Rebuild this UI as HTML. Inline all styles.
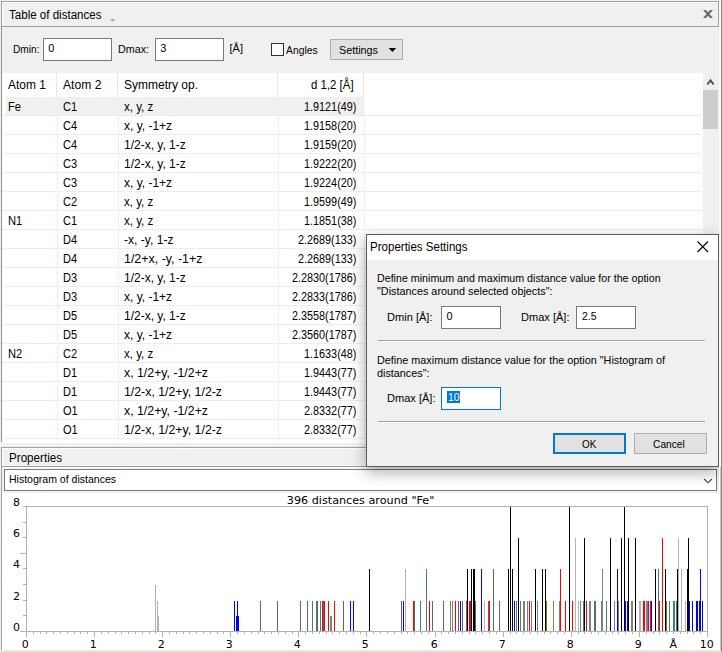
<!DOCTYPE html>
<html><head><meta charset="utf-8"><title>Table of distances</title>
<style>
html,body{margin:0;padding:0;}
body{width:722px;height:652px;overflow:hidden;background:#f0f0f0;position:relative;font-family:"Liberation Sans",sans-serif;font-size:12px;color:#000;}
div{position:absolute;box-sizing:border-box;white-space:nowrap;}
.inp{background:#fff;border:1px solid #7a7a7a;}
.btn{background:#e1e1e1;border:1px solid #adadad;}
</style></head><body>
<!-- outer frame -->
<div style="left:1px;top:1px;width:718px;height:441px;border-left:1px solid #929292;"></div>
<div style="left:721px;top:0;width:1px;height:652px;background:#8c8c8c;"></div>
<div style="left:719px;top:0;width:2px;height:447px;background:#fafafa;"></div>
<!-- title bar -->
<div style="left:1px;top:1px;width:718px;height:26px;border:1px solid #a0a0a0;background:#f0f0f0;box-shadow:inset 1px 1px 0 #fff;"></div>
<div id="t1" style="left:9.00px;top:7px;font:12px/16px 'Liberation Sans',sans-serif;transform:scaleX(0.9630);transform-origin:0 0;">Table of distances</div>
<svg style="position:absolute;left:110px;top:19px" width="6" height="4"><path d="M0 0H5.4L2.7 3Z" fill="#acacac"/></svg>
<svg style="position:absolute;left:703px;top:10px" width="10" height="8"><path d="M0 0H2.9L10 8H7.1Z" fill="#6a6a6a"/><path d="M10 0H7.1L0 8H2.9Z" fill="#6a6a6a"/></svg>
<!-- toolbar -->
<div style="left:12.50px;top:41px;font:11px/16px 'Liberation Sans',sans-serif;transform:scaleX(0.9225);transform-origin:0 0;">Dmin:</div>
<div class="inp" style="left:43px;top:38px;width:69px;height:23px;"></div>
<div style="left:48.30px;top:40px;font:11px/16px 'Liberation Sans',sans-serif;">0</div>
<div style="left:118.00px;top:41px;font:11px/16px 'Liberation Sans',sans-serif;transform:scaleX(0.9754);transform-origin:0 0;">Dmax:</div>
<div class="inp" style="left:155px;top:38px;width:69px;height:23px;"></div>
<div style="left:160.30px;top:40px;font:11px/16px 'Liberation Sans',sans-serif;">3</div>
<div style="left:229.50px;top:40px;font:11px/16px 'Liberation Sans',sans-serif;">[Å]</div>
<div style="left:271px;top:43px;width:13px;height:13px;background:#fff;border:1px solid #333;"></div>
<div style="left:286.20px;top:42px;font:11px/16px 'Liberation Sans',sans-serif;transform:scaleX(0.9395);transform-origin:0 0;">Angles</div>
<div class="btn" style="left:330px;top:39px;width:73px;height:21px;"></div>
<div style="left:338.50px;top:42px;font:11px/16px 'Liberation Sans',sans-serif;transform:scaleX(0.9812);transform-origin:0 0;">Settings</div>
<svg style="position:absolute;left:388px;top:48px" width="9" height="5"><path d="M0.7 0H8.1L4.4 4Z" fill="#000"/></svg>
<!-- table -->
<div style="left:2px;top:73px;width:701px;height:370px;background:#fff;"></div>
<div style="left:6px;top:97px;width:358px;height:19px;background:#f0f0f0;"></div>
<div style="left:2px;top:115px;width:700px;height:1px;background:#ededed;"></div>
<div style="left:2px;top:134px;width:700px;height:1px;background:#ededed;"></div>
<div style="left:2px;top:153px;width:700px;height:1px;background:#ededed;"></div>
<div style="left:2px;top:172px;width:700px;height:1px;background:#ededed;"></div>
<div style="left:2px;top:191px;width:700px;height:1px;background:#ededed;"></div>
<div style="left:2px;top:210px;width:700px;height:1px;background:#ededed;"></div>
<div style="left:2px;top:229px;width:700px;height:1px;background:#ededed;"></div>
<div style="left:2px;top:248px;width:700px;height:1px;background:#ededed;"></div>
<div style="left:2px;top:267px;width:700px;height:1px;background:#ededed;"></div>
<div style="left:2px;top:286px;width:700px;height:1px;background:#ededed;"></div>
<div style="left:2px;top:305px;width:700px;height:1px;background:#ededed;"></div>
<div style="left:2px;top:324px;width:700px;height:1px;background:#ededed;"></div>
<div style="left:2px;top:343px;width:700px;height:1px;background:#ededed;"></div>
<div style="left:2px;top:362px;width:700px;height:1px;background:#ededed;"></div>
<div style="left:2px;top:381px;width:700px;height:1px;background:#ededed;"></div>
<div style="left:2px;top:400px;width:700px;height:1px;background:#ededed;"></div>
<div style="left:2px;top:419px;width:700px;height:1px;background:#ededed;"></div>
<div style="left:2px;top:438px;width:700px;height:1px;background:#ededed;"></div>
<div style="left:56px;top:73px;width:1px;height:24px;background:#e5e5e5;"></div>
<div style="left:57px;top:116px;width:1px;height:327px;background:#efefef;"></div>
<div style="left:117px;top:73px;width:1px;height:24px;background:#e5e5e5;"></div>
<div style="left:118px;top:116px;width:1px;height:327px;background:#efefef;"></div>
<div style="left:277px;top:73px;width:1px;height:24px;background:#e5e5e5;"></div>
<div style="left:278px;top:116px;width:1px;height:327px;background:#efefef;"></div>
<div style="left:363px;top:73px;width:1px;height:24px;background:#e5e5e5;"></div>
<div style="left:364px;top:116px;width:1px;height:327px;background:#efefef;"></div>
<div style="left:8.00px;top:77px;font:12px/16px 'Liberation Sans',sans-serif;transform:scaleX(0.9943);transform-origin:0 0;">Atom 1</div>
<div style="left:63.00px;top:77px;font:12px/16px 'Liberation Sans',sans-serif;transform:scaleX(1.0101);transform-origin:0 0;">Atom 2</div>
<div style="left:124.00px;top:77px;font:12px/16px 'Liberation Sans',sans-serif;">Symmetry op.</div>
<div style="left:310.70px;top:77px;font:12px/16px 'Liberation Sans',sans-serif;transform:scaleX(0.9531);transform-origin:0 0;">d 1,2 [Å]</div>
<div style="left:8.00px;top:99px;font:12px/16px 'Liberation Sans',sans-serif;transform:scaleX(0.9300);transform-origin:0 0;">Fe</div>
<div style="left:63.00px;top:99px;font:12px/16px 'Liberation Sans',sans-serif;transform:scaleX(0.9200);transform-origin:0 0;">C1</div>
<div style="left:124.00px;top:99px;font:12px/16px 'Liberation Sans',sans-serif;transform:scaleX(0.9624);transform-origin:0 0;">x, y, z</div>
<div style="left:304.40px;top:99px;font:12px/16px 'Liberation Sans',sans-serif;transform:scaleX(0.9028);transform-origin:0 0;">1.9121(49)</div>
<div style="left:63.00px;top:118px;font:12px/16px 'Liberation Sans',sans-serif;transform:scaleX(0.9200);transform-origin:0 0;">C4</div>
<div style="left:124.00px;top:118px;font:12px/16px 'Liberation Sans',sans-serif;">x, y, -1+z</div>
<div style="left:304.40px;top:118px;font:12px/16px 'Liberation Sans',sans-serif;transform:scaleX(0.9028);transform-origin:0 0;">1.9158(20)</div>
<div style="left:63.00px;top:137px;font:12px/16px 'Liberation Sans',sans-serif;transform:scaleX(0.9200);transform-origin:0 0;">C4</div>
<div style="left:124.00px;top:137px;font:12px/16px 'Liberation Sans',sans-serif;">1/2-x, y, 1-z</div>
<div style="left:304.40px;top:137px;font:12px/16px 'Liberation Sans',sans-serif;transform:scaleX(0.9028);transform-origin:0 0;">1.9159(20)</div>
<div style="left:63.00px;top:156px;font:12px/16px 'Liberation Sans',sans-serif;transform:scaleX(0.9200);transform-origin:0 0;">C3</div>
<div style="left:124.00px;top:156px;font:12px/16px 'Liberation Sans',sans-serif;">1/2-x, y, 1-z</div>
<div style="left:304.40px;top:156px;font:12px/16px 'Liberation Sans',sans-serif;transform:scaleX(0.9028);transform-origin:0 0;">1.9222(20)</div>
<div style="left:63.00px;top:175px;font:12px/16px 'Liberation Sans',sans-serif;transform:scaleX(0.9200);transform-origin:0 0;">C3</div>
<div style="left:124.00px;top:175px;font:12px/16px 'Liberation Sans',sans-serif;">x, y, -1+z</div>
<div style="left:304.40px;top:175px;font:12px/16px 'Liberation Sans',sans-serif;transform:scaleX(0.9028);transform-origin:0 0;">1.9224(20)</div>
<div style="left:63.00px;top:194px;font:12px/16px 'Liberation Sans',sans-serif;transform:scaleX(0.9200);transform-origin:0 0;">C2</div>
<div style="left:124.00px;top:194px;font:12px/16px 'Liberation Sans',sans-serif;transform:scaleX(0.9624);transform-origin:0 0;">x, y, z</div>
<div style="left:304.40px;top:194px;font:12px/16px 'Liberation Sans',sans-serif;transform:scaleX(0.9028);transform-origin:0 0;">1.9599(49)</div>
<div style="left:8.00px;top:213px;font:12px/16px 'Liberation Sans',sans-serif;transform:scaleX(0.9300);transform-origin:0 0;">N1</div>
<div style="left:63.00px;top:213px;font:12px/16px 'Liberation Sans',sans-serif;transform:scaleX(0.9200);transform-origin:0 0;">C1</div>
<div style="left:124.00px;top:213px;font:12px/16px 'Liberation Sans',sans-serif;transform:scaleX(0.9624);transform-origin:0 0;">x, y, z</div>
<div style="left:304.40px;top:213px;font:12px/16px 'Liberation Sans',sans-serif;transform:scaleX(0.9028);transform-origin:0 0;">1.1851(38)</div>
<div style="left:63.00px;top:232px;font:12px/16px 'Liberation Sans',sans-serif;transform:scaleX(0.9200);transform-origin:0 0;">D4</div>
<div style="left:124.00px;top:232px;font:12px/16px 'Liberation Sans',sans-serif;transform:scaleX(1.0080);transform-origin:0 0;">-x, -y, 1-z</div>
<div style="left:298.40px;top:232px;font:12px/16px 'Liberation Sans',sans-serif;transform:scaleX(0.9024);transform-origin:0 0;">2.2689(133)</div>
<div style="left:63.00px;top:251px;font:12px/16px 'Liberation Sans',sans-serif;transform:scaleX(0.9200);transform-origin:0 0;">D4</div>
<div style="left:124.00px;top:251px;font:12px/16px 'Liberation Sans',sans-serif;transform:scaleX(1.0355);transform-origin:0 0;">1/2+x, -y, -1+z</div>
<div style="left:298.40px;top:251px;font:12px/16px 'Liberation Sans',sans-serif;transform:scaleX(0.9024);transform-origin:0 0;">2.2689(133)</div>
<div style="left:63.00px;top:270px;font:12px/16px 'Liberation Sans',sans-serif;transform:scaleX(0.9200);transform-origin:0 0;">D3</div>
<div style="left:124.00px;top:270px;font:12px/16px 'Liberation Sans',sans-serif;">1/2-x, y, 1-z</div>
<div style="left:292.40px;top:270px;font:12px/16px 'Liberation Sans',sans-serif;transform:scaleX(0.9021);transform-origin:0 0;">2.2830(1786)</div>
<div style="left:63.00px;top:289px;font:12px/16px 'Liberation Sans',sans-serif;transform:scaleX(0.9200);transform-origin:0 0;">D3</div>
<div style="left:124.00px;top:289px;font:12px/16px 'Liberation Sans',sans-serif;">x, y, -1+z</div>
<div style="left:292.40px;top:289px;font:12px/16px 'Liberation Sans',sans-serif;transform:scaleX(0.9021);transform-origin:0 0;">2.2833(1786)</div>
<div style="left:63.00px;top:308px;font:12px/16px 'Liberation Sans',sans-serif;transform:scaleX(0.9200);transform-origin:0 0;">D5</div>
<div style="left:124.00px;top:308px;font:12px/16px 'Liberation Sans',sans-serif;">1/2-x, y, 1-z</div>
<div style="left:292.40px;top:308px;font:12px/16px 'Liberation Sans',sans-serif;transform:scaleX(0.9021);transform-origin:0 0;">2.3558(1787)</div>
<div style="left:63.00px;top:327px;font:12px/16px 'Liberation Sans',sans-serif;transform:scaleX(0.9200);transform-origin:0 0;">D5</div>
<div style="left:124.00px;top:327px;font:12px/16px 'Liberation Sans',sans-serif;">x, y, -1+z</div>
<div style="left:292.40px;top:327px;font:12px/16px 'Liberation Sans',sans-serif;transform:scaleX(0.9021);transform-origin:0 0;">2.3560(1787)</div>
<div style="left:8.00px;top:346px;font:12px/16px 'Liberation Sans',sans-serif;transform:scaleX(0.9300);transform-origin:0 0;">N2</div>
<div style="left:63.00px;top:346px;font:12px/16px 'Liberation Sans',sans-serif;transform:scaleX(0.9200);transform-origin:0 0;">C2</div>
<div style="left:124.00px;top:346px;font:12px/16px 'Liberation Sans',sans-serif;transform:scaleX(0.9624);transform-origin:0 0;">x, y, z</div>
<div style="left:304.40px;top:346px;font:12px/16px 'Liberation Sans',sans-serif;transform:scaleX(0.9028);transform-origin:0 0;">1.1633(48)</div>
<div style="left:63.00px;top:365px;font:12px/16px 'Liberation Sans',sans-serif;transform:scaleX(0.9200);transform-origin:0 0;">D1</div>
<div style="left:124.00px;top:365px;font:12px/16px 'Liberation Sans',sans-serif;transform:scaleX(1.0266);transform-origin:0 0;">x, 1/2+y, -1/2+z</div>
<div style="left:304.40px;top:365px;font:12px/16px 'Liberation Sans',sans-serif;transform:scaleX(0.9028);transform-origin:0 0;">1.9443(77)</div>
<div style="left:63.00px;top:384px;font:12px/16px 'Liberation Sans',sans-serif;transform:scaleX(0.9200);transform-origin:0 0;">D1</div>
<div style="left:124.00px;top:384px;font:12px/16px 'Liberation Sans',sans-serif;transform:scaleX(1.0263);transform-origin:0 0;">1/2-x, 1/2+y, 1/2-z</div>
<div style="left:304.40px;top:384px;font:12px/16px 'Liberation Sans',sans-serif;transform:scaleX(0.9028);transform-origin:0 0;">1.9443(77)</div>
<div style="left:63.00px;top:403px;font:12px/16px 'Liberation Sans',sans-serif;transform:scaleX(0.9200);transform-origin:0 0;">O1</div>
<div style="left:124.00px;top:403px;font:12px/16px 'Liberation Sans',sans-serif;transform:scaleX(1.0266);transform-origin:0 0;">x, 1/2+y, -1/2+z</div>
<div style="left:304.40px;top:403px;font:12px/16px 'Liberation Sans',sans-serif;transform:scaleX(0.9028);transform-origin:0 0;">2.8332(77)</div>
<div style="left:63.00px;top:422px;font:12px/16px 'Liberation Sans',sans-serif;transform:scaleX(0.9200);transform-origin:0 0;">O1</div>
<div style="left:124.00px;top:422px;font:12px/16px 'Liberation Sans',sans-serif;transform:scaleX(1.0263);transform-origin:0 0;">1/2-x, 1/2+y, 1/2-z</div>
<div style="left:304.40px;top:422px;font:12px/16px 'Liberation Sans',sans-serif;transform:scaleX(0.9028);transform-origin:0 0;">2.8332(77)</div>
<!-- scrollbar -->
<div style="left:703px;top:73px;width:16px;height:370px;background:#f0f0f0;"></div>
<div style="left:703px;top:90px;width:15px;height:39px;background:#cdcdcd;"></div>
<svg style="position:absolute;left:706px;top:78px" width="9" height="8"><path d="M1.4 6.5L4.5 2.5L7.6 6.5" stroke="#505050" stroke-width="2" fill="none"/></svg>
<!-- properties panel -->
<div style="left:1px;top:447px;width:720px;height:204px;background:#fff;border:1px solid #a0a0a0;border-bottom:none;"></div>
<div style="left:2px;top:448px;width:718px;height:19px;background:#f0f0f0;border-bottom:1px solid #a0a0a0;box-shadow:inset 1px 1px 0 #fff;"></div>
<div id="t2" style="left:9.00px;top:450px;font:12px/16px 'Liberation Sans',sans-serif;transform:scaleX(0.9691);transform-origin:0 0;">Properties</div>
<div style="left:2px;top:467px;width:718px;height:26px;background:#f0f0f0;border-top:2px solid #f9f9f9;"></div>
<div style="left:4px;top:469px;width:713px;height:22px;background:#fff;border:1px solid #7a7a7a;"></div>
<div style="left:8.50px;top:471px;font:11px/16px 'Liberation Sans',sans-serif;transform:scaleX(0.9564);transform-origin:0 0;">Histogram of distances</div>
<svg style="position:absolute;left:703px;top:478px" width="10" height="6"><path d="M1.2 1L5 4.8L8.8 1" stroke="#404040" stroke-width="1.1" fill="none"/></svg>
<div style="left:0;top:650px;width:722px;height:2px;background:#e6e6e6;"></div>
<svg id="chart" width="722" height="652" viewBox="0 0 722 652" style="position:absolute;left:0;top:0" shape-rendering="crispEdges">
<rect x="26.5" y="506.5" width="681" height="125" fill="none" stroke="#b2b2b2" stroke-width="1"/>
<rect x="20" y="631" width="6" height="1" fill="#b2b2b2"/>
<rect x="23" y="615" width="3" height="1" fill="#b2b2b2"/>
<rect x="23" y="600" width="3" height="1" fill="#b2b2b2"/>
<rect x="23" y="584" width="3" height="1" fill="#b2b2b2"/>
<rect x="23" y="568" width="3" height="1" fill="#b2b2b2"/>
<rect x="20" y="553" width="6" height="1" fill="#b2b2b2"/>
<rect x="23" y="537" width="3" height="1" fill="#b2b2b2"/>
<rect x="23" y="522" width="3" height="1" fill="#b2b2b2"/>
<rect x="23" y="506" width="3" height="1" fill="#b2b2b2"/>
<rect x="26" y="632" width="1" height="5" fill="#b2b2b2"/>
<rect x="33" y="632" width="1" height="2" fill="#b2b2b2"/>
<rect x="40" y="632" width="1" height="2" fill="#b2b2b2"/>
<rect x="46" y="632" width="1" height="2" fill="#b2b2b2"/>
<rect x="53" y="632" width="1" height="2" fill="#b2b2b2"/>
<rect x="60" y="632" width="1" height="2" fill="#b2b2b2"/>
<rect x="67" y="632" width="1" height="2" fill="#b2b2b2"/>
<rect x="74" y="632" width="1" height="2" fill="#b2b2b2"/>
<rect x="80" y="632" width="1" height="2" fill="#b2b2b2"/>
<rect x="87" y="632" width="1" height="2" fill="#b2b2b2"/>
<rect x="94" y="632" width="1" height="5" fill="#b2b2b2"/>
<rect x="101" y="632" width="1" height="2" fill="#b2b2b2"/>
<rect x="108" y="632" width="1" height="2" fill="#b2b2b2"/>
<rect x="115" y="632" width="1" height="2" fill="#b2b2b2"/>
<rect x="121" y="632" width="1" height="2" fill="#b2b2b2"/>
<rect x="128" y="632" width="1" height="2" fill="#b2b2b2"/>
<rect x="135" y="632" width="1" height="2" fill="#b2b2b2"/>
<rect x="142" y="632" width="1" height="2" fill="#b2b2b2"/>
<rect x="149" y="632" width="1" height="2" fill="#b2b2b2"/>
<rect x="155" y="632" width="1" height="2" fill="#b2b2b2"/>
<rect x="162" y="632" width="1" height="5" fill="#b2b2b2"/>
<rect x="169" y="632" width="1" height="2" fill="#b2b2b2"/>
<rect x="176" y="632" width="1" height="2" fill="#b2b2b2"/>
<rect x="183" y="632" width="1" height="2" fill="#b2b2b2"/>
<rect x="189" y="632" width="1" height="2" fill="#b2b2b2"/>
<rect x="196" y="632" width="1" height="2" fill="#b2b2b2"/>
<rect x="203" y="632" width="1" height="2" fill="#b2b2b2"/>
<rect x="210" y="632" width="1" height="2" fill="#b2b2b2"/>
<rect x="217" y="632" width="1" height="2" fill="#b2b2b2"/>
<rect x="223" y="632" width="1" height="2" fill="#b2b2b2"/>
<rect x="230" y="632" width="1" height="5" fill="#b2b2b2"/>
<rect x="237" y="632" width="1" height="2" fill="#b2b2b2"/>
<rect x="244" y="632" width="1" height="2" fill="#b2b2b2"/>
<rect x="251" y="632" width="1" height="2" fill="#b2b2b2"/>
<rect x="258" y="632" width="1" height="2" fill="#b2b2b2"/>
<rect x="264" y="632" width="1" height="2" fill="#b2b2b2"/>
<rect x="271" y="632" width="1" height="2" fill="#b2b2b2"/>
<rect x="278" y="632" width="1" height="2" fill="#b2b2b2"/>
<rect x="285" y="632" width="1" height="2" fill="#b2b2b2"/>
<rect x="292" y="632" width="1" height="2" fill="#b2b2b2"/>
<rect x="298" y="632" width="1" height="5" fill="#b2b2b2"/>
<rect x="305" y="632" width="1" height="2" fill="#b2b2b2"/>
<rect x="312" y="632" width="1" height="2" fill="#b2b2b2"/>
<rect x="319" y="632" width="1" height="2" fill="#b2b2b2"/>
<rect x="326" y="632" width="1" height="2" fill="#b2b2b2"/>
<rect x="332" y="632" width="1" height="2" fill="#b2b2b2"/>
<rect x="339" y="632" width="1" height="2" fill="#b2b2b2"/>
<rect x="346" y="632" width="1" height="2" fill="#b2b2b2"/>
<rect x="353" y="632" width="1" height="2" fill="#b2b2b2"/>
<rect x="360" y="632" width="1" height="2" fill="#b2b2b2"/>
<rect x="366" y="632" width="1" height="5" fill="#b2b2b2"/>
<rect x="373" y="632" width="1" height="2" fill="#b2b2b2"/>
<rect x="380" y="632" width="1" height="2" fill="#b2b2b2"/>
<rect x="387" y="632" width="1" height="2" fill="#b2b2b2"/>
<rect x="394" y="632" width="1" height="2" fill="#b2b2b2"/>
<rect x="401" y="632" width="1" height="2" fill="#b2b2b2"/>
<rect x="407" y="632" width="1" height="2" fill="#b2b2b2"/>
<rect x="414" y="632" width="1" height="2" fill="#b2b2b2"/>
<rect x="421" y="632" width="1" height="2" fill="#b2b2b2"/>
<rect x="428" y="632" width="1" height="2" fill="#b2b2b2"/>
<rect x="435" y="632" width="1" height="5" fill="#b2b2b2"/>
<rect x="441" y="632" width="1" height="2" fill="#b2b2b2"/>
<rect x="448" y="632" width="1" height="2" fill="#b2b2b2"/>
<rect x="455" y="632" width="1" height="2" fill="#b2b2b2"/>
<rect x="462" y="632" width="1" height="2" fill="#b2b2b2"/>
<rect x="469" y="632" width="1" height="2" fill="#b2b2b2"/>
<rect x="475" y="632" width="1" height="2" fill="#b2b2b2"/>
<rect x="482" y="632" width="1" height="2" fill="#b2b2b2"/>
<rect x="489" y="632" width="1" height="2" fill="#b2b2b2"/>
<rect x="496" y="632" width="1" height="2" fill="#b2b2b2"/>
<rect x="503" y="632" width="1" height="5" fill="#b2b2b2"/>
<rect x="510" y="632" width="1" height="2" fill="#b2b2b2"/>
<rect x="516" y="632" width="1" height="2" fill="#b2b2b2"/>
<rect x="523" y="632" width="1" height="2" fill="#b2b2b2"/>
<rect x="530" y="632" width="1" height="2" fill="#b2b2b2"/>
<rect x="537" y="632" width="1" height="2" fill="#b2b2b2"/>
<rect x="544" y="632" width="1" height="2" fill="#b2b2b2"/>
<rect x="550" y="632" width="1" height="2" fill="#b2b2b2"/>
<rect x="557" y="632" width="1" height="2" fill="#b2b2b2"/>
<rect x="564" y="632" width="1" height="2" fill="#b2b2b2"/>
<rect x="571" y="632" width="1" height="5" fill="#b2b2b2"/>
<rect x="578" y="632" width="1" height="2" fill="#b2b2b2"/>
<rect x="584" y="632" width="1" height="2" fill="#b2b2b2"/>
<rect x="591" y="632" width="1" height="2" fill="#b2b2b2"/>
<rect x="598" y="632" width="1" height="2" fill="#b2b2b2"/>
<rect x="605" y="632" width="1" height="2" fill="#b2b2b2"/>
<rect x="612" y="632" width="1" height="2" fill="#b2b2b2"/>
<rect x="618" y="632" width="1" height="2" fill="#b2b2b2"/>
<rect x="625" y="632" width="1" height="2" fill="#b2b2b2"/>
<rect x="632" y="632" width="1" height="2" fill="#b2b2b2"/>
<rect x="639" y="632" width="1" height="5" fill="#b2b2b2"/>
<rect x="646" y="632" width="1" height="2" fill="#b2b2b2"/>
<rect x="653" y="632" width="1" height="2" fill="#b2b2b2"/>
<rect x="659" y="632" width="1" height="2" fill="#b2b2b2"/>
<rect x="666" y="632" width="1" height="2" fill="#b2b2b2"/>
<rect x="673" y="632" width="1" height="2" fill="#b2b2b2"/>
<rect x="680" y="632" width="1" height="2" fill="#b2b2b2"/>
<rect x="687" y="632" width="1" height="2" fill="#b2b2b2"/>
<rect x="693" y="632" width="1" height="2" fill="#b2b2b2"/>
<rect x="700" y="632" width="1" height="2" fill="#b2b2b2"/>
<rect x="707" y="632" width="1" height="5" fill="#b2b2b2"/>
<rect x="155" y="585" width="1" height="46" fill="#b4b4b4"/>
<rect x="157" y="601" width="1" height="30" fill="#b4b4b4"/>
<rect x="158" y="616" width="1" height="15" fill="#b4b4b4"/>
<rect x="234" y="601" width="1" height="30" fill="#0000ff"/>
<rect x="236" y="616" width="3" height="15" fill="#0000ff"/>
<rect x="237" y="601" width="1" height="30" fill="#0000ff"/>
<rect x="260" y="601" width="1" height="30" fill="#646464"/>
<rect x="277" y="601" width="1" height="30" fill="#646464"/>
<rect x="300" y="601" width="1" height="30" fill="#646464"/>
<rect x="307" y="601" width="1" height="30" fill="#646464"/>
<rect x="312" y="601" width="1" height="30" fill="#408080"/>
<rect x="316" y="601" width="1" height="30" fill="#408080"/>
<rect x="317" y="601" width="1" height="30" fill="#646464"/>
<rect x="320" y="601" width="1" height="30" fill="#408080"/>
<rect x="322" y="601" width="1" height="30" fill="#ff0000"/>
<rect x="323" y="601" width="1" height="30" fill="#646464"/>
<rect x="324" y="601" width="1" height="30" fill="#ff0000"/>
<rect x="328" y="601" width="1" height="30" fill="#ff0000"/>
<rect x="330" y="616" width="2" height="15" fill="#808080"/>
<rect x="334" y="601" width="1" height="30" fill="#ff0000"/>
<rect x="343" y="601" width="1" height="30" fill="#646464"/>
<rect x="350" y="601" width="1" height="30" fill="#0000ff"/>
<rect x="353" y="601" width="1" height="30" fill="#0000ff"/>
<rect x="369" y="569" width="1" height="62" fill="#000000"/>
<rect x="401" y="601" width="1" height="30" fill="#646464"/>
<rect x="403" y="601" width="1" height="30" fill="#0000ff"/>
<rect x="405" y="569" width="1" height="62" fill="#b4b4b4"/>
<rect x="413" y="601" width="1" height="30" fill="#ff0000"/>
<rect x="414" y="601" width="1" height="30" fill="#646464"/>
<rect x="420" y="601" width="1" height="30" fill="#408080"/>
<rect x="426" y="569" width="1" height="62" fill="#408080"/>
<rect x="429" y="601" width="1" height="30" fill="#ff0000"/>
<rect x="432" y="601" width="1" height="30" fill="#646464"/>
<rect x="443" y="601" width="1" height="30" fill="#646464"/>
<rect x="450" y="601" width="1" height="30" fill="#808080"/>
<rect x="452" y="601" width="1" height="30" fill="#808080"/>
<rect x="455" y="601" width="1" height="30" fill="#ff0000"/>
<rect x="458" y="601" width="1" height="30" fill="#646464"/>
<rect x="460" y="601" width="1" height="30" fill="#0000ff"/>
<rect x="462" y="601" width="1" height="30" fill="#646464"/>
<rect x="466" y="601" width="1" height="30" fill="#646464"/>
<rect x="467" y="569" width="1" height="62" fill="#000000"/>
<rect x="469" y="601" width="2" height="30" fill="#ff0000"/>
<rect x="471" y="569" width="1" height="62" fill="#000000"/>
<rect x="473" y="569" width="2" height="62" fill="#000000"/>
<rect x="475" y="601" width="1" height="30" fill="#646464"/>
<rect x="481" y="569" width="1" height="62" fill="#0000ff"/>
<rect x="484" y="601" width="1" height="30" fill="#b4b4b4"/>
<rect x="488" y="601" width="1" height="30" fill="#646464"/>
<rect x="489" y="601" width="1" height="30" fill="#ff0000"/>
<rect x="493" y="569" width="1" height="62" fill="#646464"/>
<rect x="499" y="601" width="1" height="30" fill="#646464"/>
<rect x="508" y="569" width="1" height="62" fill="#000000"/>
<rect x="510" y="507" width="1" height="124" fill="#000000"/>
<rect x="512" y="569" width="1" height="62" fill="#000000"/>
<rect x="514" y="601" width="1" height="30" fill="#0000ff"/>
<rect x="516" y="601" width="1" height="30" fill="#408080"/>
<rect x="518" y="538" width="1" height="93" fill="#000000"/>
<rect x="520" y="601" width="1" height="30" fill="#408080"/>
<rect x="523" y="601" width="2" height="30" fill="#808080"/>
<rect x="527" y="601" width="1" height="30" fill="#808080"/>
<rect x="529" y="601" width="1" height="30" fill="#ff0000"/>
<rect x="531" y="601" width="1" height="30" fill="#808080"/>
<rect x="535" y="569" width="1" height="62" fill="#000000"/>
<rect x="537" y="601" width="1" height="30" fill="#808080"/>
<rect x="542" y="569" width="1" height="62" fill="#000000"/>
<rect x="545" y="569" width="1" height="62" fill="#000000"/>
<rect x="546" y="601" width="1" height="30" fill="#808000"/>
<rect x="553" y="601" width="1" height="30" fill="#808080"/>
<rect x="559" y="601" width="1" height="30" fill="#808080"/>
<rect x="560" y="569" width="1" height="62" fill="#ff0000"/>
<rect x="565" y="601" width="1" height="30" fill="#ff0000"/>
<rect x="569" y="507" width="1" height="124" fill="#000000"/>
<rect x="572" y="601" width="1" height="30" fill="#ff0000"/>
<rect x="575" y="538" width="1" height="93" fill="#b4b4b4"/>
<rect x="578" y="601" width="1" height="30" fill="#b4b4b4"/>
<rect x="580" y="601" width="1" height="30" fill="#808080"/>
<rect x="583" y="601" width="1" height="30" fill="#408080"/>
<rect x="584" y="538" width="1" height="93" fill="#000000"/>
<rect x="586" y="601" width="1" height="30" fill="#ff0000"/>
<rect x="589" y="601" width="2" height="30" fill="#808080"/>
<rect x="594" y="601" width="1" height="30" fill="#408080"/>
<rect x="595" y="601" width="1" height="30" fill="#646464"/>
<rect x="601" y="601" width="2" height="30" fill="#808080"/>
<rect x="602" y="569" width="1" height="62" fill="#808080"/>
<rect x="606" y="601" width="1" height="30" fill="#408080"/>
<rect x="610" y="538" width="1" height="93" fill="#000000"/>
<rect x="614" y="601" width="1" height="30" fill="#808080"/>
<rect x="617" y="569" width="1" height="62" fill="#0000ff"/>
<rect x="618" y="601" width="1" height="30" fill="#808080"/>
<rect x="621" y="538" width="1" height="93" fill="#000000"/>
<rect x="624" y="507" width="1" height="124" fill="#000000"/>
<rect x="625" y="601" width="1" height="30" fill="#0000ff"/>
<rect x="627" y="601" width="1" height="30" fill="#0000ff"/>
<rect x="628" y="538" width="1" height="93" fill="#000000"/>
<rect x="631" y="601" width="2" height="30" fill="#808080"/>
<rect x="635" y="538" width="1" height="93" fill="#000000"/>
<rect x="639" y="601" width="2" height="30" fill="#b4b4b4"/>
<rect x="643" y="601" width="2" height="30" fill="#ff0000"/>
<rect x="646" y="601" width="2" height="30" fill="#808080"/>
<rect x="648" y="601" width="1" height="30" fill="#ff0000"/>
<rect x="650" y="601" width="1" height="30" fill="#ff0000"/>
<rect x="651" y="601" width="1" height="30" fill="#0000ff"/>
<rect x="655" y="569" width="1" height="62" fill="#000000"/>
<rect x="658" y="569" width="1" height="62" fill="#408080"/>
<rect x="659" y="601" width="1" height="30" fill="#ff0000"/>
<rect x="662" y="538" width="1" height="93" fill="#ff0000"/>
<rect x="665" y="569" width="1" height="62" fill="#000000"/>
<rect x="666" y="601" width="1" height="30" fill="#808000"/>
<rect x="669" y="601" width="1" height="30" fill="#408080"/>
<rect x="673" y="601" width="2" height="30" fill="#408080"/>
<rect x="676" y="601" width="1" height="30" fill="#408080"/>
<rect x="677" y="569" width="1" height="62" fill="#000000"/>
<rect x="678" y="538" width="1" height="93" fill="#b4b4b4"/>
<rect x="681" y="569" width="1" height="62" fill="#b4b4b4"/>
<rect x="685" y="601" width="1" height="30" fill="#b4b4b4"/>
<rect x="687" y="569" width="1" height="62" fill="#000000"/>
<rect x="688" y="538" width="1" height="93" fill="#000000"/>
<rect x="689" y="601" width="1" height="30" fill="#0000ff"/>
<rect x="692" y="601" width="1" height="30" fill="#0000ff"/>
<rect x="696" y="601" width="2" height="30" fill="#0000ff"/>
<rect x="699" y="601" width="1" height="30" fill="#0000ff"/>
<rect x="700" y="569" width="1" height="62" fill="#0000ff"/>
<rect x="702" y="601" width="1" height="30" fill="#0000ff"/>
<g font-family="'DejaVu Sans', 'Liberation Sans', sans-serif" font-size="11" fill="#000">
<text x="20" y="631" text-anchor="end">0</text>
<text x="20" y="600" text-anchor="end">2</text>
<text x="20" y="568" text-anchor="end">4</text>
<text x="20" y="537" text-anchor="end">6</text>
<text x="20" y="506" text-anchor="end">8</text>
<text x="25.2" y="648" text-anchor="middle">0</text>
<text x="93.2" y="648" text-anchor="middle">1</text>
<text x="161.2" y="648" text-anchor="middle">2</text>
<text x="229.2" y="648" text-anchor="middle">3</text>
<text x="297.2" y="648" text-anchor="middle">4</text>
<text x="365.2" y="648" text-anchor="middle">5</text>
<text x="434.2" y="648" text-anchor="middle">6</text>
<text x="502.2" y="648" text-anchor="middle">7</text>
<text x="570.2" y="648" text-anchor="middle">8</text>
<text x="638.2" y="648" text-anchor="middle">9</text>
<text x="706.7" y="648" text-anchor="middle">10</text>
<text x="673.2" y="648" text-anchor="middle">Å</text>
<text x="360.6" y="504" text-anchor="middle" font-size="11.2">396 distances around "Fe"</text>
</g></svg>
<!-- dialog -->
<div id="dlg" style="left:366px;top:234px;width:353px;height:233px;background:#f0f0f0;border:1px solid #5a5a5a;box-shadow:0 5px 14px rgba(0,0,0,0.34);">
<div style="left:0;top:0;width:351px;height:25px;background:#fff;"></div>
</div>
<div id="t3" style="left:369.80px;top:239px;font:12px/16px 'Liberation Sans',sans-serif;transform:scaleX(0.9617);transform-origin:0 0;">Properties Settings</div>
<svg style="position:absolute;left:697px;top:241px" width="12" height="12"><path d="M0.5 0.5L11 11M11 0.5L0.5 11" stroke="#000" stroke-width="1.1" fill="none"/></svg>
<div style="left:377.00px;top:270px;font:11px/16px 'Liberation Sans',sans-serif;transform:scaleX(0.9704);transform-origin:0 0;">Define minimum and maximum distance value for the option</div>
<div style="left:377.00px;top:283px;font:11px/16px 'Liberation Sans',sans-serif;transform:scaleX(0.9837);transform-origin:0 0;">"Distances around selected objects":</div>
<div style="left:387.00px;top:309px;font:11px/16px 'Liberation Sans',sans-serif;transform:scaleX(1.0060);transform-origin:0 0;">Dmin [Å]:</div>
<div class="inp" style="left:441px;top:306px;width:60px;height:23px;"></div>
<div style="left:446.50px;top:308px;font:11px/16px 'Liberation Sans',sans-serif;">0</div>
<div style="left:521.00px;top:309px;font:11px/16px 'Liberation Sans',sans-serif;transform:scaleX(1.0044);transform-origin:0 0;">Dmax [Å]:</div>
<div class="inp" style="left:576px;top:306px;width:60px;height:23px;"></div>
<div style="left:581.50px;top:308px;font:11px/16px 'Liberation Sans',sans-serif;transform:scaleX(0.9482);transform-origin:0 0;">2.5</div>
<div style="left:378px;top:340px;width:327px;height:2px;border-top:1px solid #a0a0a0;border-bottom:1px solid #fff;"></div>
<div style="left:377.00px;top:352px;font:11px/16px 'Liberation Sans',sans-serif;transform:scaleX(0.9847);transform-origin:0 0;">Define maximum distance value for the option "Histogram of</div>
<div style="left:377.00px;top:365px;font:11px/16px 'Liberation Sans',sans-serif;transform:scaleX(0.9826);transform-origin:0 0;">distances":</div>
<div style="left:387.00px;top:390px;font:11px/16px 'Liberation Sans',sans-serif;transform:scaleX(1.0044);transform-origin:0 0;">Dmax [Å]:</div>
<div class="inp" style="left:441px;top:387px;width:60px;height:23px;border-color:#0078d7;"></div>
<div style="left:447px;top:390.5px;width:13px;height:12px;background:#0078d7;"></div>
<div style="left:447.80px;top:389px;font:11px/16px 'Liberation Sans',sans-serif;transform:scaleX(0.9481);transform-origin:0 0;color:#fff;">10</div>
<div style="left:378px;top:421px;width:327px;height:2px;border-top:1px solid #a0a0a0;border-bottom:1px solid #fff;"></div>
<div class="btn" style="left:553px;top:433px;width:73px;height:21px;border:2px solid #0078d7;"></div>
<div style="left:582.15px;top:436px;font:11px/16px 'Liberation Sans',sans-serif;transform:scaleX(0.8998);transform-origin:0 0;">OK</div>
<div class="btn" style="left:634px;top:433px;width:73px;height:21px;"></div>
<div style="left:653.40px;top:436px;font:11px/16px 'Liberation Sans',sans-serif;transform:scaleX(0.9287);transform-origin:0 0;">Cancel</div>
<div style="left:719px;top:0;width:2px;height:467px;background:#f9f9f9;"></div>
<div style="left:719px;top:467px;width:1px;height:183px;background:#fdfdfd;"></div>
<div style="left:720px;top:467px;width:1px;height:183px;background:#c6c6c6;"></div>
<div style="left:721px;top:0;width:1px;height:652px;background:#8c8c8c;"></div>
</body></html>
